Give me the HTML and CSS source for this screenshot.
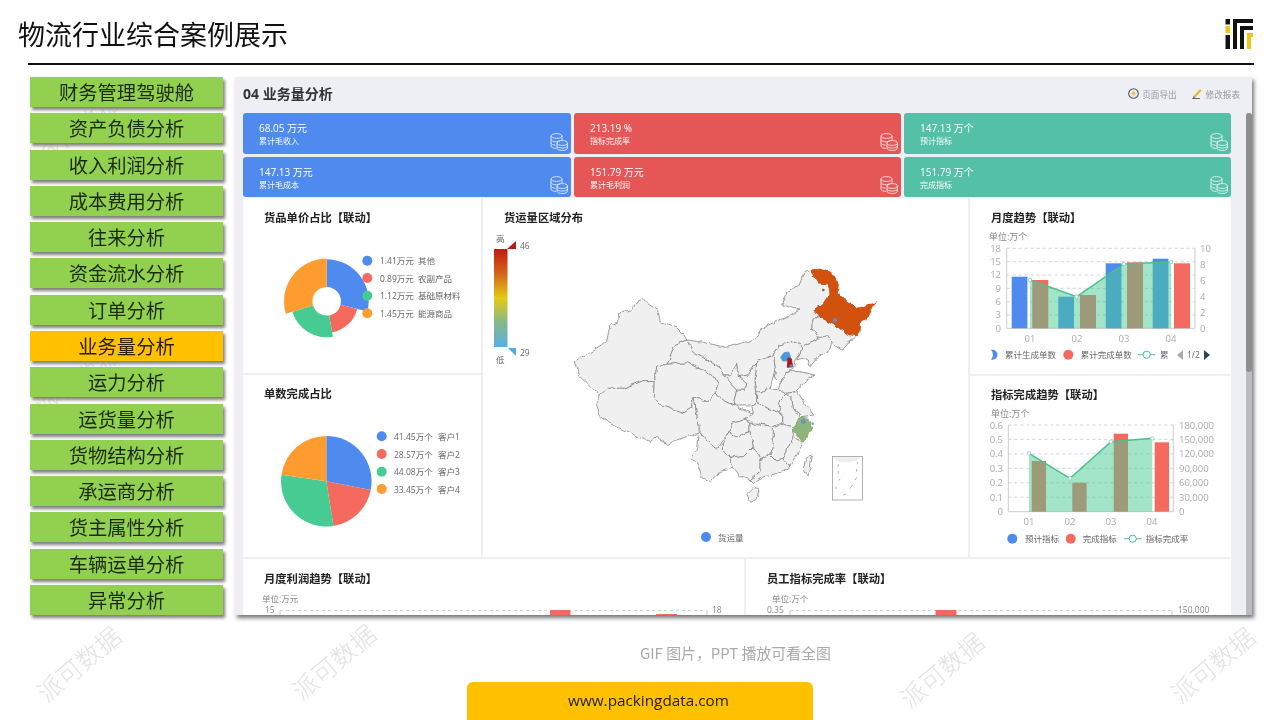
FILE: index.html
```html
<!DOCTYPE html>
<html lang="zh-CN">
<head>
<meta charset="utf-8">
<title>物流行业综合案例展示</title>
<link rel="stylesheet" href="styles.css">
</head>
<body>
<svg class="defs" width="0" height="0" aria-hidden="true">
  <symbol id="coins" viewBox="0 0 18 18">
    <g fill="none" stroke="#fff" stroke-width="1">
      <ellipse cx="6.5" cy="3" rx="5.5" ry="2.4"/>
      <path d="M1 3v10c0 1.4 2.4 2.4 5.2 2.4M1 6.4c0 1.3 2.4 2.4 5.5 2.4 1.2 0 2.4-.2 3.3-.5M12 3v4M1 9.8c0 1.3 2.4 2.4 4.6 2.4"/>
      <ellipse cx="12.2" cy="10" rx="5.2" ry="2.4"/>
      <path d="M7 10v5.2c0 1.3 2.3 2.3 5.2 2.3s5.2-1 5.2-2.3V10M7 12.8c0 1.3 2.3 2.3 5.2 2.3s5.2-1 5.2-2.3"/>
    </g>
  </symbol>
</svg>
<div class="page">
  <div class="wm wm1">派可数据</div>
  <div class="wm wm2">派可数据</div>
  <div class="wm wm3">派可数据</div>
  <div class="wm wm4">派可数据</div>
  <div class="wm wm5">派可数据</div>
  <div class="wm wm6">派可数据</div>

  <header class="top">
    <h1 class="title">物流行业综合案例展示</h1>
    <svg class="logo" viewBox="1225 19 28 30" width="28" height="30">
      <rect x="1225.5" y="19" width="4.5" height="5.5" fill="#111"/>
      <rect x="1225.5" y="26" width="4.5" height="7" fill="#f0c419"/>
      <rect x="1225.5" y="35" width="4.5" height="14" fill="#111"/>
      <path d="M1233 19h20v4h-16v26h-4z" fill="#111"/>
      <path d="M1240 26h13v4h-9v19h-4z" fill="#111"/>
      <path d="M1247 33h6v4h-2v12h-4z" fill="#f0c419"/>
    </svg>
  </header>
  <div class="rule"></div>

  <div class="content">
    <nav class="side">
      <a class="nav">财务管理驾驶舱</a>
      <a class="nav">资产负债分析</a>
      <a class="nav">收入利润分析</a>
      <a class="nav">成本费用分析</a>
      <a class="nav">往来分析</a>
      <a class="nav">资金流水分析</a>
      <a class="nav">订单分析</a>
      <a class="nav active">业务量分析</a>
      <a class="nav">运力分析</a>
      <a class="nav">运货量分析</a>
      <a class="nav">货物结构分析</a>
      <a class="nav">承运商分析</a>
      <a class="nav">货主属性分析</a>
      <a class="nav">车辆运单分析</a>
      <a class="nav">异常分析</a>
    </nav>

    <main class="main">
      <div class="inner">
        <div class="bar">
          <h2 class="bar-title">04 业务量分析</h2>
          <div class="actions">
            <span class="action">
              <svg width="11" height="11" viewBox="0 0 11 11"><circle cx="5.5" cy="5.5" r="4.8" fill="none" stroke="#555" stroke-width="1.100"/><circle cx="5.5" cy="5.5" r="2" fill="#eec65a"/></svg>
              页面导出
            </span>
            <span class="action">
              <svg width="11" height="11" viewBox="0 0 11 11"><path d="M1.500 8l6.500-7 1.800 1.500-6.500 7z" fill="#e8b93a"/><path d="M1.500 8l2 1.500-2.500.6z" fill="#666"/><path d="M0.300 10.500h7.500" stroke="#666" stroke-width="1"/></svg>
              修改报表
            </span>
          </div>
        </div>

        <div class="body">
          <section class="kpis">
            <div class="kpi blue"><div><div class="num">68.05 万元</div><div class="lbl">累计毛收入</div></div><svg class="coin"><use href="#coins"/></svg></div>
            <div class="kpi red"><div><div class="num">213.19 %</div><div class="lbl">指标完成率</div></div><svg class="coin"><use href="#coins"/></svg></div>
            <div class="kpi teal"><div><div class="num">147.13 万个</div><div class="lbl">预计指标</div></div><svg class="coin"><use href="#coins"/></svg></div>
            <div class="kpi blue"><div><div class="num">147.13 万元</div><div class="lbl">累计毛成本</div></div><svg class="coin"><use href="#coins"/></svg></div>
            <div class="kpi red"><div><div class="num">151.79 万元</div><div class="lbl">累计毛利润</div></div><svg class="coin"><use href="#coins"/></svg></div>
            <div class="kpi teal"><div><div class="num">151.79 万个</div><div class="lbl">完成指标</div></div><svg class="coin"><use href="#coins"/></svg></div>
          </section>

          <section class="charts">
            <div class="col col-left">
              <article class="panel p-lt">
                <h3 class="ptitle">货品单价占比【联动】</h3>
                <svg class="chart" viewBox="243 225 238 148" width="238" height="148">
                  <path d="M326.700 259.300A42 42 0 0 1 367.450 311.460L340.570 304.760A14.300 14.300 0 0 0 326.700 287Z" fill="#4f8bef"/>
                  <path d="M357.260 308.920A31.500 31.500 0 0 1 332.170 332.320L329.180 315.380A14.300 14.300 0 0 0 340.570 304.760Z" fill="#f46a5e"/>
                  <path d="M332.950 336.750A36 36 0 0 1 292.280 311.820L313.030 305.480A14.300 14.300 0 0 0 329.180 315.380Z" fill="#46cc93"/>
                  <path d="M285.870 313.780A42.700 42.700 0 0 1 326.700 258.600L326.700 287A14.300 14.300 0 0 0 313.030 305.480Z" fill="#fe9c30"/>
                  <circle cx="367.300" cy="260.700" r="5" fill="#4f8bef"/>
                  <circle cx="367.300" cy="278" r="5" fill="#f46a5e"/>
                  <circle cx="367.300" cy="295.700" r="5" fill="#46cc93"/>
                  <circle cx="367.300" cy="313.300" r="5" fill="#fe9c30"/>
                  <text class="t-leg" x="380" y="264">1.41万元</text><text class="t-leg" x="418" y="264">其他</text>
                  <text class="t-leg" x="380" y="281.500">0.89万元</text><text class="t-leg" x="418" y="281.500">农副产品</text>
                  <text class="t-leg" x="380" y="299">1.12万元</text><text class="t-leg" x="418" y="299">基础原材料</text>
                  <text class="t-leg" x="380" y="316.500">1.45万元</text><text class="t-leg" x="418" y="316.500">能源商品</text>
                </svg>
              </article>
              <article class="panel p-lb">
                <h3 class="ptitle tight">单数完成占比</h3>
                <svg class="chart" viewBox="243 401 238 156" width="238" height="156">
                  <path d="M326.300 481.300L326.300 436A45.300 45.300 0 0 1 370.740 490.020Z" fill="#4f8bef"/>
                  <path d="M326.300 481.300L370.740 490.020A45.300 45.300 0 0 1 333.550 526.010Z" fill="#f46a5e"/>
                  <path d="M326.300 481.300L333.550 526.010A45.300 45.300 0 0 1 281.500 474.700Z" fill="#46cc93"/>
                  <path d="M326.300 481.300L281.500 474.700A45.300 45.300 0 0 1 326.300 436Z" fill="#fe9c30"/>
                  <circle cx="381.700" cy="436.300" r="5" fill="#4f8bef"/>
                  <circle cx="381.700" cy="454" r="5" fill="#f46a5e"/>
                  <circle cx="381.700" cy="471.700" r="5" fill="#46cc93"/>
                  <circle cx="381.700" cy="489" r="5" fill="#fe9c30"/>
                  <text class="t-leg" x="394" y="439.800">41.45万个</text><text class="t-leg" x="438" y="439.800">客户1</text>
                  <text class="t-leg" x="394" y="457.500">28.57万个</text><text class="t-leg" x="438" y="457.500">客户2</text>
                  <text class="t-leg" x="394" y="475">44.08万个</text><text class="t-leg" x="438" y="475">客户3</text>
                  <text class="t-leg" x="394" y="492.500">33.45万个</text><text class="t-leg" x="438" y="492.500">客户4</text>
                </svg>
              </article>
            </div>

            <article class="panel p-map">
              <h3 class="ptitle">货运量区域分布</h3>
              <svg class="chart" viewBox="483 225 485 332" width="485" height="332">
                <defs>
                  <linearGradient id="scale" x1="0" y1="0" x2="0" y2="1">
                    <stop offset="0" stop-color="#c01a12"/>
                    <stop offset=".25" stop-color="#d4641a"/>
                    <stop offset=".5" stop-color="#e4ca14"/>
                    <stop offset=".75" stop-color="#86b88a"/>
                    <stop offset="1" stop-color="#55b0e6"/>
                  </linearGradient>
                  <filter id="rough" filterUnits="userSpaceOnUse" x="0" y="0" width="1020" height="780">
                    <feTurbulence type="fractalNoise" baseFrequency=".045" numOctaves="2" seed="4"/>
                    <feDisplacementMap in="SourceGraphic" scale="16" xChannelSelector="R" yChannelSelector="G"/>
                  </filter>
                </defs>
                <rect x="494" y="249" width="13.500" height="98" fill="url(#scale)"/>
                <path d="M507 249l9-8v8z" fill="#c01a12"/>
                <path d="M508 348h8v8z" fill="#55a8e0"/>
                <text class="t-leg" x="496" y="241.500">高</text>
                <text class="t-leg" x="496" y="362.500">低</text>
                <text class="t-leg" x="520" y="248.500">46</text>
                <text class="t-leg" x="520" y="355.500">29</text>

                <g transform="translate(560 260) scale(.33333)" class="map">
                  <g filter="url(#rough)">
                    <path d="M42 305L75 285 100 270 140 245 150 195 172 185 182 155 215 150 235 120 250 113 262 130 295 152 300 185 345 198 372 225 380 240 345 255 322 312 290 322 283 365 240 365 190 385 140 385 120 403 95 385 60 350Z"/>
                    <path d="M120 403L140 385 190 385 240 365 283 365 280 410 300 432 350 450 375 458 395 445 395 410 405 430 412 470 415 520 380 530 350 540 320 553 290 530 270 545 230 530 190 510 150 490 118 465 112 440Z"/>
                    <path d="M290 322L322 312 385 308 420 325 460 345 478 375 465 400 445 425 395 410 395 445 375 458 350 450 300 432 280 410 283 365Z"/>
                    <path d="M380 240L400 275 430 290 480 325 490 345 510 345 515 375 530 390 520 435 490 420 465 400 478 375 460 345 420 325 385 308 322 312 345 255Z"/>
                    <path d="M380 240L420 245 500 262 560 245 590 235 605 205 650 185 690 165 720 150 665 135 680 100 720 70 735 38 750 30 775 68 805 72 810 100 790 130 765 150 780 170 760 175 755 205 775 235 725 260 700 245 660 255 640 285 590 305 565 345 535 350 530 310 510 345 490 345 480 325 430 290 400 275Z"/>
                    <path d="M780 170L820 190 860 222 893 228 870 240 845 270 815 250 800 228 775 235 755 205 760 175Z"/>
                    <path d="M775 235L800 228 815 250 810 270 775 290 750 320 745 300 725 295 710 300 720 280 725 260Z"/>
                    <path d="M640 285L660 255 700 245 725 260 720 280 705 300 700 325 680 335 660 370 640 350 645 320Z"/>
                    <path d="M660 370L680 335 720 335 765 345 730 370 710 395 680 400 655 390Z"/>
                    <path d="M590 305L640 285 645 320 640 350 630 385 590 400 585 360Z"/>
                    <path d="M535 350L565 345 590 305 585 360 590 400 590 425 575 435 520 435 530 390 555 390 560 370Z"/>
                    <path d="M490 345L510 345 530 310 535 350 560 370 555 390 530 390 515 375Z"/>
                    <path d="M590 400L630 385 655 390 680 400 655 425 665 460 610 440 590 425Z"/>
                    <path d="M680 400L710 395 735 430 760 465 725 470 700 445 695 415Z"/>
                    <path d="M655 425L680 400 695 415 700 445 720 472 700 505 665 490 665 460Z"/>
                    <path d="M575 435L590 425 610 440 665 460 665 490 640 500 590 490 570 490 555 480 580 460Z"/>
                    <path d="M395 410L445 425 465 400 490 420 520 435 555 450 580 460 555 480 515 490 510 515 470 568 450 550 420 515 412 470 405 430Z"/>
                    <path d="M555 480L570 490 570 515 555 520 530 530 510 515 515 490Z"/>
                    <path d="M510 515L530 530 570 515 580 560 550 590 510 595 490 570 490 550Z"/>
                    <path d="M415 520L420 515 450 550 470 568 490 550 490 570 510 595 520 625 480 635 455 665 425 650 410 605 395 600 410 560Z"/>
                    <path d="M590 490L640 500 640 560 630 585 600 600 580 560 570 515 570 490Z"/>
                    <path d="M640 500L665 490 700 505 700 530 670 595 645 600 630 585 640 560Z"/>
                    <path d="M700 530L722 545 725 560 690 620 670 595Z"/>
                    <path d="M510 595L550 590 580 560 600 600 600 635 570 660 540 650 520 625Z"/>
                    <path d="M600 600L630 585 645 600 670 595 690 620 650 640 600 655 580 670 570 660 600 635Z"/>
                    <path d="M560 705L580 685 597 690 590 715 570 725Z"/>
                    <path d="M740 590L757 585 750 625 740 650 730 625Z"/>
                    <path class="hlj" d="M750 30L780 27 815 40 835 70 832 100 850 115 890 145 945 128 925 170 900 190 895 228 860 222 820 190 780 170 765 150 790 130 810 100 805 72 775 68Z"/>
                    <path class="zj" d="M725 470L745 475 755 510 745 535 722 545 700 510 715 478Z"/>
                  </g>
                  <path class="bj" d="M662 292L672 278 686 276 692 292 680 303 668 303Z"/>
                  <path class="tj" d="M684 294L694 296 698 320 682 322Z"/>
                  <circle class="pt" cx="693" cy="318" r="5"/>
                  <circle class="pt" cx="825" cy="180" r="7"/>
                  <circle class="pt" cx="730" cy="485" r="7"/>
                  <circle class="pt" cx="758" cy="491" r="4"/>
                  <circle class="brown" cx="790" cy="90" r="4"/>
                  <rect class="box" x="817" y="590" width="90" height="130"/>
                  <path class="box-top" d="M819 592h86l-8 5c-14 8-30 10-50 9-12-1-22-6-28-14z"/>
                  <path class="box" d="M835 613v8M835 633v8M840 656l-4 6M828 680v7M850 705l8-3M877 676l-8 10M890 652l-5 8M890 627v8M893 606l-2 7"/>
                </g>
                <circle cx="706" cy="537" r="5" fill="#4f8bef"/>
                <text class="t-leg" x="718" y="541">货运量</text>
              </svg>
            </article>

            <div class="col col-right">
              <article class="panel p-rt">
                <h3 class="ptitle">月度趋势【联动】</h3>
                <svg class="chart" viewBox="970 225 261 149" width="261" height="149">
                  <text class="t-unit" x="989" y="240">单位:万个</text>
                  <g class="grid">
                    <path d="M1006.700 248.300H1195M1006.700 261.700H1195M1006.700 275H1195M1006.700 288.300H1195M1006.700 301.700H1195M1006.700 315H1195"/>
                  </g>
                  <path class="axis" d="M1006.700 248.300V328.300H1195V248.300"/>
                  <g class="t-ax end">
                    <text x="1001" y="251.500">18</text><text x="1001" y="265">15</text><text x="1001" y="278">12</text><text x="1001" y="291.500">9</text><text x="1001" y="305">6</text><text x="1001" y="318">3</text><text x="1001" y="331.500">0</text>
                  </g>
                  <g class="t-ax">
                    <text x="1200" y="251.500">10</text><text x="1200" y="267.500">8</text><text x="1200" y="283.500">6</text><text x="1200" y="299.500">4</text><text x="1200" y="315.500">2</text><text x="1200" y="331.500">0</text>
                  </g>
                  <g class="t-ax mid">
                    <text x="1030" y="341.500">01</text><text x="1077" y="341.500">02</text><text x="1124" y="341.500">03</text><text x="1171" y="341.500">04</text>
                  </g>
                  <g fill="#4f8bef">
                    <rect x="1011.700" y="276.700" width="15.700" height="51.600"/><rect x="1058.300" y="296.700" width="15.700" height="31.600"/><rect x="1105.700" y="263.300" width="15.700" height="65"/><rect x="1152.700" y="258.700" width="15.700" height="69.600"/>
                  </g>
                  <g fill="#f46a5e">
                    <rect x="1032.300" y="280" width="16" height="48.300"/><rect x="1080" y="295" width="16" height="33.300"/><rect x="1127" y="262.300" width="16" height="66"/><rect x="1174" y="263.300" width="16" height="65"/>
                  </g>
                  <path class="area" d="M1030 280L1076.700 296.700 1124 264 1171 262V328.300H1030Z"/>
                  <path class="line" d="M1030 280L1076.700 296.700 1124 264 1171 262"/>
                  <circle class="dot" cx="1030" cy="280" r="1.800"/><circle class="dot" cx="1076.700" cy="296.700" r="1.800"/><circle class="dot" cx="1124" cy="264" r="1.800"/><circle class="dot" cx="1171" cy="262" r="1.800"/>
                  <path d="M991 349.700h1.500a5 5 0 0 1 0 10h-1.500a8 8 0 0 0 0-10z" fill="#4f8bef"/>
                  <text class="t-leg" x="1005" y="358">累计生成单数</text>
                  <circle cx="1068.300" cy="354.700" r="5" fill="#f46a5e"/>
                  <text class="t-leg" x="1080.700" y="358">累计完成单数</text>
                  <path class="line thin" d="M1138 354.700h17"/><circle class="ring" cx="1146.700" cy="354.700" r="3.600"/>
                  <text class="t-leg" x="1160" y="358">累</text>
                  <path d="M1183 350v10l-6-5z" fill="#aaa"/>
                  <text class="t-leg" x="1187" y="358">1/2</text>
                  <path d="M1204 350v10l6-5z" fill="#2f4554"/>
                </svg>
              </article>
              <article class="panel p-rb">
                <h3 class="ptitle tight">指标完成趋势【联动】</h3>
                <svg class="chart" viewBox="970 402 261 155" width="261" height="155">
                  <text class="t-unit" x="991" y="417">单位:万个</text>
                  <g class="grid">
                    <path d="M1008.300 425H1173.300M1008.300 439.400H1173.300M1008.300 453.900H1173.300M1008.300 468.300H1173.300M1008.300 482.800H1173.300M1008.300 497.200H1173.300"/>
                  </g>
                  <path class="axis" d="M1008.300 425V511.700H1173.300V425"/>
                  <g class="t-ax end">
                    <text x="1003" y="428.500">0.6</text><text x="1003" y="443">0.5</text><text x="1003" y="457">0.4</text><text x="1003" y="472">0.3</text><text x="1003" y="486">0.2</text><text x="1003" y="501">0.1</text><text x="1003" y="515">0</text>
                  </g>
                  <g class="t-ax">
                    <text x="1179" y="428.500">180,000</text><text x="1179" y="443">150,000</text><text x="1179" y="457">120,000</text><text x="1179" y="472">90,000</text><text x="1179" y="486">60,000</text><text x="1179" y="501">30,000</text><text x="1179" y="515">0</text>
                  </g>
                  <g class="t-ax mid">
                    <text x="1029" y="525">01</text><text x="1070" y="525">02</text><text x="1111" y="525">03</text><text x="1152" y="525">04</text>
                  </g>
                  <g fill="#f46a5e">
                    <rect x="1031.700" y="461" width="14.300" height="50.700"/><rect x="1072.300" y="482.700" width="14.300" height="29"/><rect x="1113.700" y="433.700" width="14.300" height="78"/><rect x="1154.700" y="442.300" width="14.300" height="69.400"/>
                  </g>
                  <path class="area" d="M1029 453.300L1070 478.300 1111 441.700 1152.300 438.300V511.700H1029Z"/>
                  <path class="line" d="M1029 453.300L1070 478.300 1111 441.700 1152.300 438.300"/>
                  <circle class="dot" cx="1029" cy="453.300" r="1.800"/><circle class="dot" cx="1070" cy="478.300" r="1.800"/><circle class="dot" cx="1111" cy="441.700" r="1.800"/><circle class="dot" cx="1152.300" cy="438.300" r="1.800"/>
                  <circle cx="1012.300" cy="538.700" r="5" fill="#4f8bef"/>
                  <text class="t-leg" x="1025" y="542">预计指标</text>
                  <circle cx="1070.700" cy="538.700" r="5" fill="#f46a5e"/>
                  <text class="t-leg" x="1082.700" y="542">完成指标</text>
                  <path class="line thin" d="M1124 538.700h17.700"/><circle class="ring" cx="1132.700" cy="538.700" r="3.600"/>
                  <text class="t-leg" x="1145.700" y="542">指标完成率</text>
                </svg>
              </article>
            </div>
          </section>

          <section class="lower">
            <article class="panel p-bl">
              <h3 class="ptitle">月度利润趋势【联动】</h3>
              <svg class="chart" viewBox="243 586 501 40" width="501" height="40">
                <text class="t-small" x="262" y="601.500">单位:万元</text>
                <text class="t-small" x="265" y="612.500">15</text>
                <path class="grid-line" d="M280 610.500H707"/>
                <path class="axis" d="M280 610.500V626M707 610.500V626"/>
                <text class="t-small" x="712" y="612.500">18</text>
                <rect x="550" y="610" width="20.500" height="16" fill="#f46a5e"/>
                <rect x="656" y="614" width="21" height="12" fill="#f46a5e"/>
              </svg>
            </article>
            <article class="panel p-br">
              <h3 class="ptitle">员工指标完成率【联动】</h3>
              <svg class="chart" viewBox="746 586 485 40" width="485" height="40">
                <text class="t-small" x="772" y="601.500">单位:万个</text>
                <text class="t-small" x="767" y="612.500">0.35</text>
                <path class="grid-line" d="M790 610.500H1172"/>
                <path class="axis" d="M790 610.500V626M1172 610.500V626"/>
                <text class="t-small" x="1178" y="612.500">150,000</text>
                <rect x="935.500" y="610" width="21" height="16" fill="#f46a5e"/>
              </svg>
            </article>
          </section>
        </div>
      </div>
      <div class="scroll"><div class="thumb"></div></div>
    </main>
  </div>

  <footer class="foot">
    <p class="note">GIF 图片，PPT 播放可看全图</p>
    <div class="site">www.packingdata.com</div>
  </footer>
</div>
</body>
</html>
```
FILE: styles.css
```css
* { box-sizing: border-box; }
html, body { margin: 0; padding: 0; background: #fff; }
body { font-family: "Open Sans", "Noto Sans CJK SC", sans-serif; }
.defs { position: absolute; }
.page { position: relative; width: 1280px; height: 720px; overflow: hidden; background: #fff; filter: blur(.35px); }

.wm { position: absolute; z-index: 0; width: 120px; text-align: center; font: 300 25px/32px "Noto Sans CJK SC", sans-serif; color: #e2e2e2; transform: rotate(-40deg); white-space: nowrap; }
.wm1 { left: 18px; top: 647px; }
.wm2 { left: 273px; top: 645px; }
.wm3 { left: 881px; top: 653px; }
.wm4 { left: 1152px; top: 648px; }
.wm5 { left: 18px; top: 112px; }
.wm6 { left: 18px; top: 364px; }

.top { position: relative; z-index: 1; height: 63px; padding: 5px 27px 0 18px; display: flex; justify-content: space-between; align-items: center; }
.title { margin: 0; font: 400 27px/40px "Noto Sans CJK SC", sans-serif; color: #111; }
.logo { display: block; }
.rule { position: relative; z-index: 1; height: 2px; margin: 0 26px 0 28px; background: #111; }

.content { position: relative; z-index: 1; display: flex; gap: 12px; height: 538px; margin: 12px 0 0 30px; }

.side { width: 193px; display: flex; flex-direction: column; justify-content: space-between; }
.nav { display: flex; height: 30px; align-items: center; justify-content: center; background: #92d050; color: #1c2a10; font: 400 19.300px/30px "Noto Sans CJK SC", sans-serif; box-shadow: 2px 3px 3px #808080; }
.nav.active { background: #ffc000; color: #2a2006; }

.main { width: 1017px; height: 538px; display: flex; background: #eeeef5; box-shadow: 2px 3px 4px #777; }
.inner { width: 1011px; height: 538px; overflow: hidden; }
.bar { height: 36px; padding: 0 6px 3px 8px; display: flex; justify-content: space-between; align-items: center; }
.bar-title { margin: 0; font: 700 14px/20px "Open Sans", "Noto Sans CJK SC", sans-serif; color: #333; }
.actions { display: flex; gap: 15px; }
.action { display: flex; align-items: center; gap: 3px; font: 400 8.600px/12px "Noto Sans CJK SC", sans-serif; color: #999; }

.body { width: 988px; margin-left: 8px; display: flex; flex-direction: column; }
.kpis { display: grid; grid-template-columns: 328px 327px 327px; grid-template-rows: 41px 40px; gap: 3px; }
.kpi { display: flex; justify-content: space-between; align-items: flex-end; padding: 0 3px 3px 16px; border-radius: 3px; color: #fff; }
.kpi > div { align-self: flex-start; padding-top: 9px; }
.blue { background: #4f8bef; }
.red { background: #e55757; }
.teal { background: #55c0a8; }
.num { font: 400 10px/13px "Open Sans", "Noto Sans CJK SC", sans-serif; }
.lbl { font: 400 8px/11px "Noto Sans CJK SC", sans-serif; opacity: .95; }
.coin { width: 18px; height: 18px; opacity: .75; }

.charts { display: flex; gap: 2px; margin-top: 1px; }
.col { display: flex; flex-direction: column; gap: 2px; }
.col-left { width: 238px; }
.col-right { width: 261px; }
.panel { background: #fff; overflow: hidden; }
.p-lt { height: 175px; }
.p-lb { height: 182px; }
.p-rt { height: 176px; }
.p-rb { height: 181px; }
.p-map { width: 485px; height: 359px; }
.ptitle { margin: 0; padding: 12px 0 1px 21px; font: 700 11.300px/14px "Noto Sans CJK SC", sans-serif; color: #222; }
.ptitle.tight { padding-top: 11px; }
.chart { display: block; }

.lower { display: flex; gap: 2px; margin-top: 2px; }
.p-bl { width: 501px; height: 70px; }
.p-br { width: 485px; height: 70px; }

.scroll { width: 6px; margin-top: 36px; background: #bcbcc0; border-radius: 3px 3px 0 0; }
.thumb { height: 259px; background: #8e8e8e; border-radius: 3px; }

text { font-family: "Open Sans", "Noto Sans CJK SC", sans-serif; }
.t-leg { font-size: 8.500px; fill: #666; }
.t-unit { font-size: 9px; fill: #888; }
.t-small { font-size: 8.500px; fill: #888; }
.t-ax text { font-size: 9.500px; fill: #aaa; }
.t-ax.end text { text-anchor: end; }
.t-ax.mid text { text-anchor: middle; }
.grid path, .grid-line { fill: none; stroke: #d8d0d0; stroke-width: 1; stroke-dasharray: 3 3; }
.axis { fill: none; stroke: #ccc; stroke-width: 1; }
.area { fill: #46cc93; fill-opacity: .5; }
.line { fill: none; stroke: #4cc08f; stroke-width: 1.500; }
.line.thin { stroke-width: 1; }
.dot { fill: #fff; stroke: #7fd6b2; stroke-width: .8; }
.ring { fill: #fff; stroke: #4cc08f; stroke-width: 1; }

.map path { fill: #f0f0f0; stroke: #858585; stroke-width: 2.400; stroke-linejoin: round; }
.map .hlj { fill: #d1510f; stroke: #c84e10; }
.map .zj { fill: #8fb67a; stroke: #7d9e6a; }
.map .bj { fill: #4f96d8; stroke: #4f96d8; }
.map .tj { fill: #b01a1a; stroke: #8a1414; }
.map .pt { fill: #5a8fd8; stroke: none; opacity: .85; }
.map .brown { fill: #8a5a3a; stroke: none; }
.map .box { fill: none; stroke: #8a8a8a; stroke-width: 2; }
.map .box-top { fill: #eee; stroke: none; }

.foot { position: absolute; z-index: 1; left: 0; right: 0; bottom: 0; display: flex; flex-direction: column; align-items: center; }
.note { align-self: flex-start; margin: 0 0 19px 640px; font: 400 14.900px/20px "Noto Sans CJK SC", sans-serif; color: #aaa; }
.site { width: 346px; height: 38px; padding-left: 17px; border-radius: 6px 6px 0 0; background: #ffc000; color: #222; font: 400 15.300px/37px "Open Sans", sans-serif; text-align: center; }
```
